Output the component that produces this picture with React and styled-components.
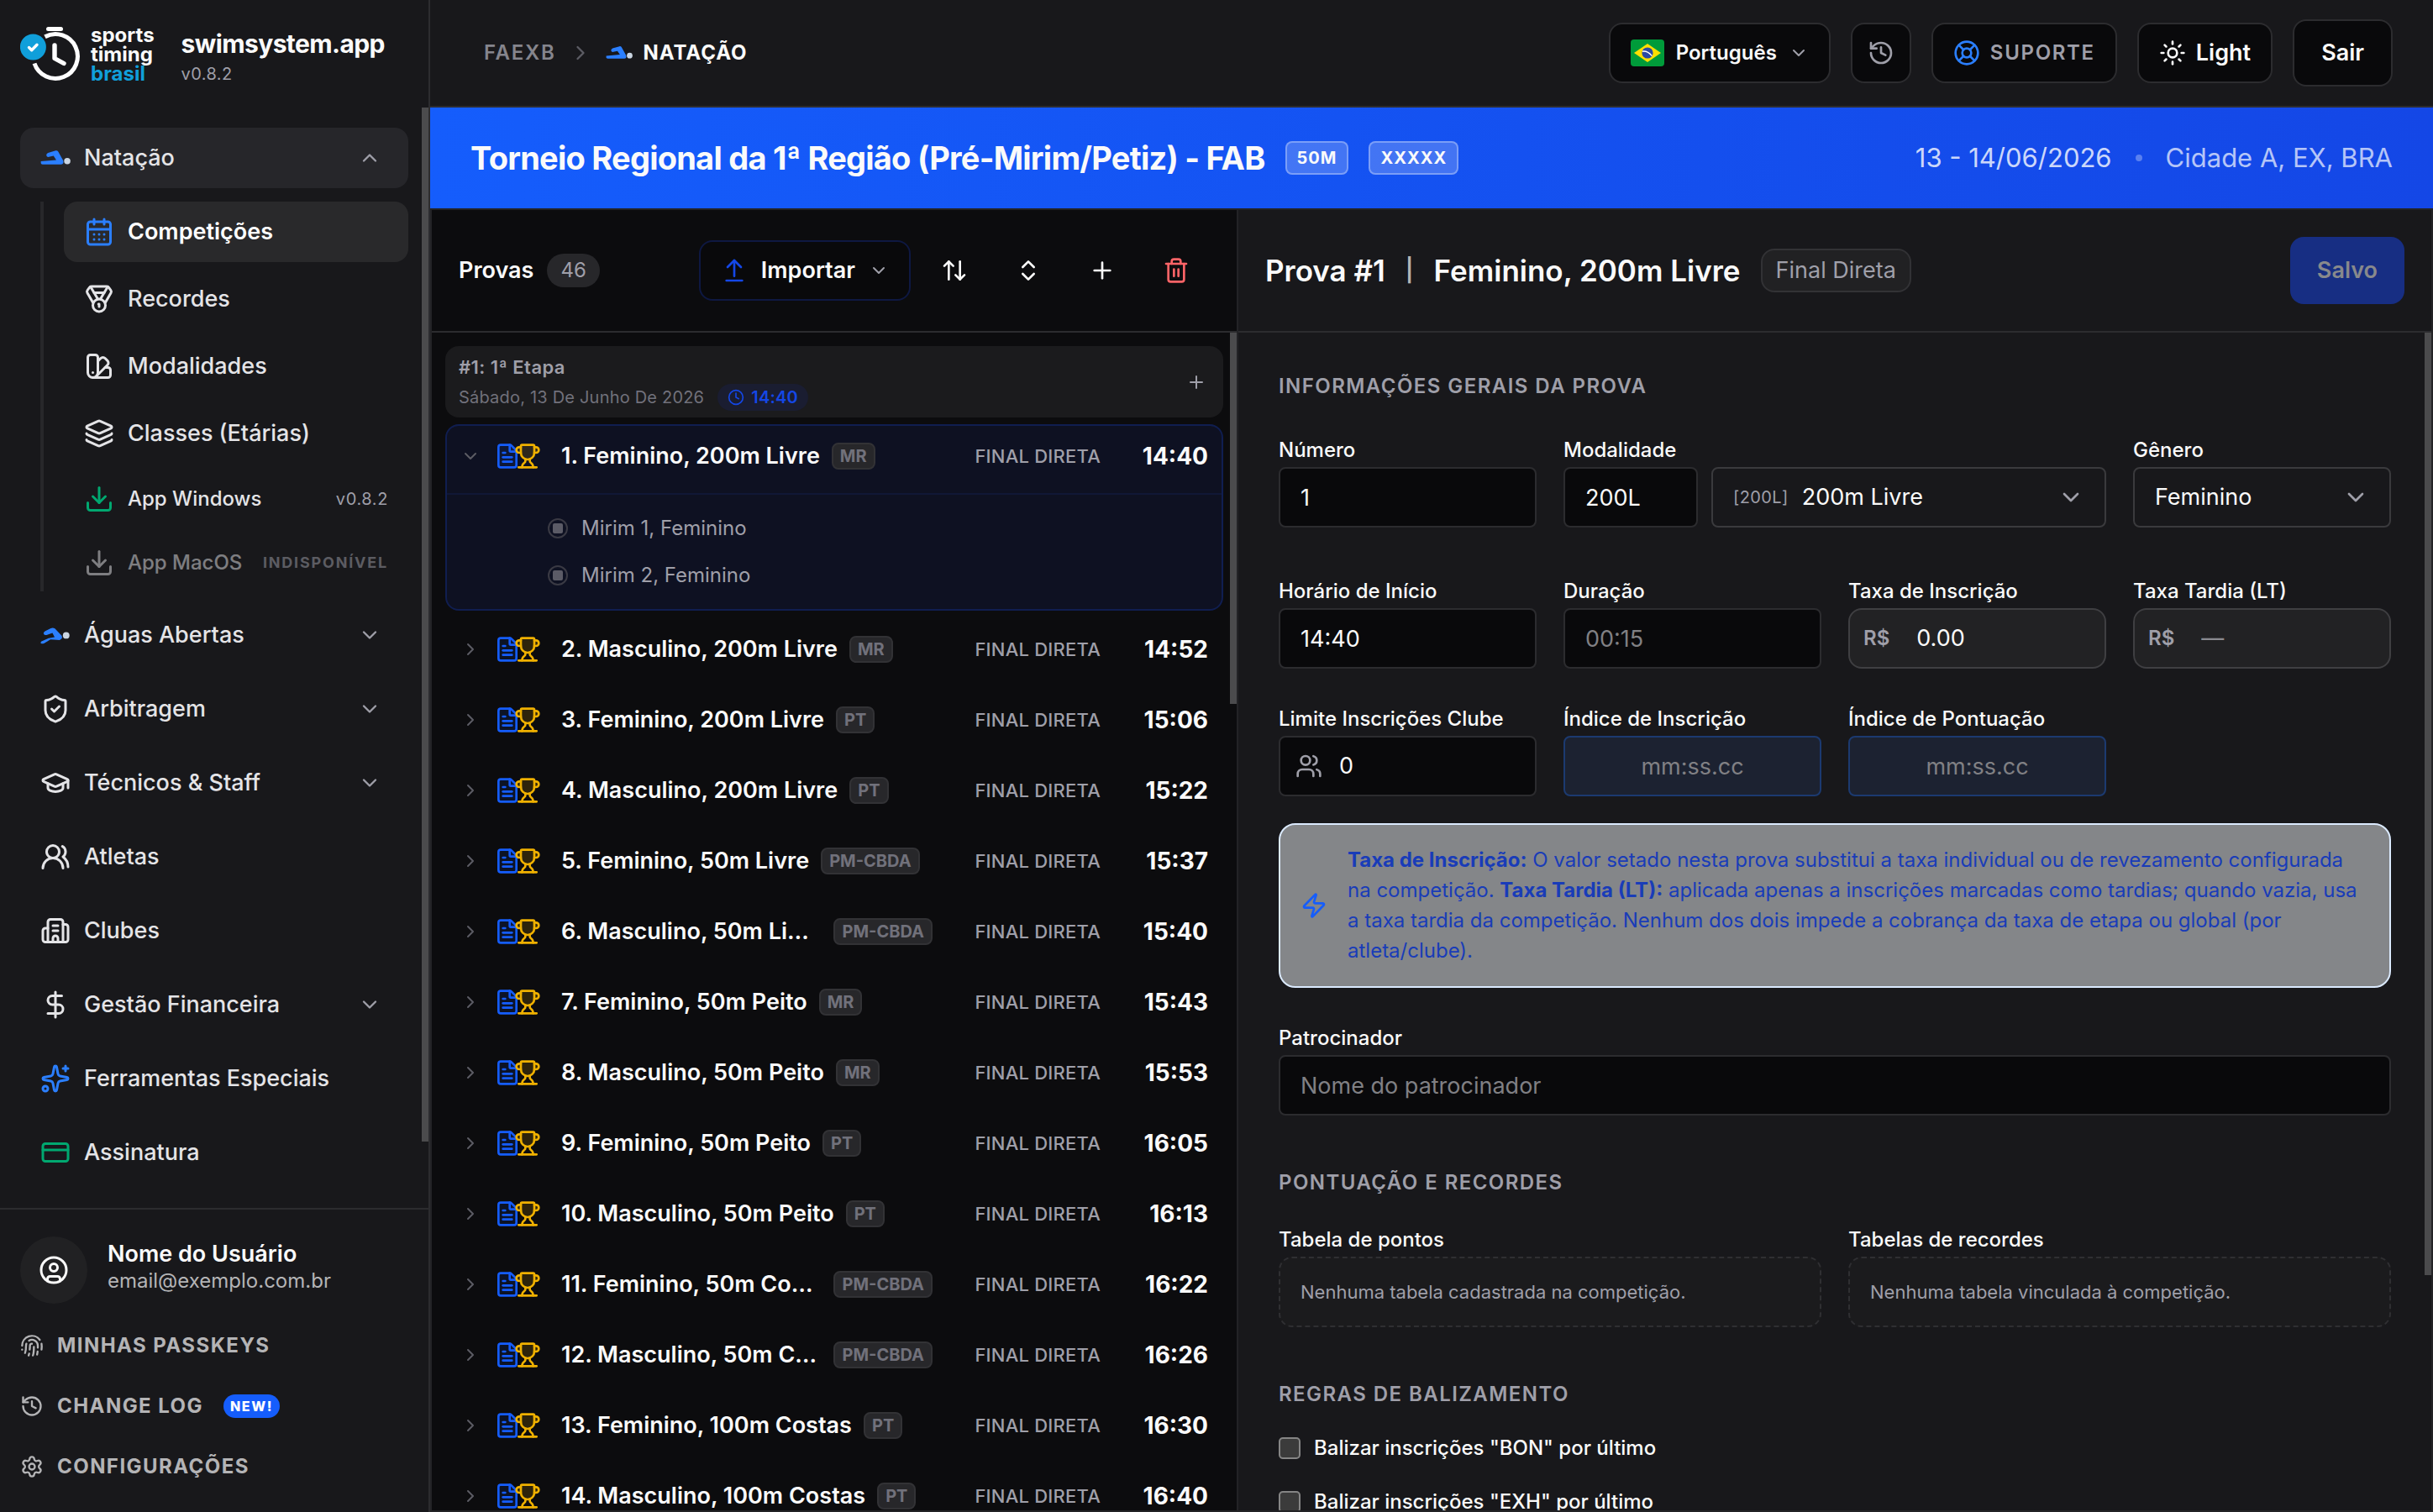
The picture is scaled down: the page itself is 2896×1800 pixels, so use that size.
// src/App.jsx
import React, { useState } from 'react';
import styled, { createGlobalStyle, css } from 'styled-components';
import {
  ArrowUpDown,
  ArrowUpFromLine,
  Building2,
  CalendarDays,
  ChevronDown,
  ChevronRight,
  ChevronsUpDown,
  ChevronUp,
  CircleUser,
  Clock,
  CreditCard,
  DollarSign,
  Download,
  FileText,
  Fingerprint,
  GraduationCap,
  History,
  Layers,
  LifeBuoy,
  Medal,
  Plus,
  Settings,
  ShieldCheck,
  Sparkles,
  Sun,
  SwatchBook,
  Trash2,
  Trophy,
  Users,
  UsersRound,
  Zap,
} from 'lucide-react';

const GlobalStyle = createGlobalStyle`
  * {
    box-sizing: border-box;
  }
  body {
    margin: 0;
    background: #09090b;
    color: #fafafa;
    font-family: 'Inter', 'Liberation Sans', sans-serif;
    font-size: 27px;
    line-height: 32px;
  }
  button, input, select {
    font: inherit;
    color: inherit;
    margin: 0;
  }
  button {
    cursor: pointer;
  }
  a {
    color: inherit;
    text-decoration: none;
  }
  h1, h2, h3, p, ul {
    margin: 0;
    padding: 0;
  }
  ul {
    list-style: none;
  }
  svg {
    flex-shrink: 0;
  }
`;

const Page = styled.div`
  display: flex;
  height: 100vh;
  overflow: hidden;
`;

// Polegar da barra de rolagem, sobreposto à borda da área rolável
const ScrollThumb = styled.div`
  position: absolute;
  top: 0;
  right: 0;
  width: 8px;
  height: ${({ $size }) => $size};
  background: #4b4b4d;
`;

/* ---------- Barra lateral ---------- */

const Sidebar = styled.aside`
  display: flex;
  flex-direction: column;
  flex: 0 0 512px;
  min-width: 0;
  background: #18181b;
  border-right: 2px solid #2c2c2f;
`;

const Brand = styled.div`
  display: flex;
  align-items: center;
  height: 128px;
  padding: 0 24px;
  flex-shrink: 0;
`;

const BrandWords = styled.div`
  display: flex;
  flex-direction: column;
  margin: 0 32px 0 12px;
  font-size: 24px;
  font-weight: 700;
  line-height: 23px;

  span {
    color: #109fda;
  }
`;

const BrandName = styled.div`
  display: flex;
  flex-direction: column;
  padding-top: 12px;
  font-size: 30px;
  font-weight: 700;
  line-height: 36px;
  letter-spacing: -0.02em;

  small {
    font-size: 20px;
    font-weight: 400;
    letter-spacing: 0.02em;
    color: #9f9fa9;
  }
`;

const NavArea = styled.nav`
  position: relative;
  flex: 1;
  min-height: 0;
  padding: 24px 24px 0;
  overflow: hidden;
`;

const NavList = styled.ul`
  display: flex;
  flex-direction: column;
  gap: 16px;
`;

const NavItem = styled.a`
  display: flex;
  align-items: center;
  gap: 16px;
  height: 72px;
  padding: 0 32px 0 24px;
  border-radius: 16px;
  font-weight: 500;
  color: #e4e4e7;
  background: ${({ $open }) => ($open ? '#26262a' : 'transparent')};

  > span {
    flex: 1;
  }
`;

const NavIcon = styled.i`
  display: flex;
  align-items: center;
  justify-content: center;
  width: 36px;
  flex-shrink: 0;
  color: ${({ $color }) => $color || 'inherit'};
`;

const SubList = styled.ul`
  display: flex;
  flex-direction: column;
  gap: 8px;
  margin: 16px 0 0 24px;
  padding-left: 24px;
  border-left: 4px solid #27272a;
`;

const SubItem = styled.a`
  display: flex;
  align-items: center;
  gap: 16px;
  height: ${({ $small }) => ($small ? 68 : 72)}px;
  padding: 0 24px;
  border-radius: 16px;
  font-size: ${({ $small }) => ($small ? 24 : 27)}px;
  font-weight: ${({ $active }) => ($active ? 600 : 500)};
  color: ${({ $active }) => ($active ? '#ffffff' : '#e4e4e7')};
  background: ${({ $active }) => ($active ? '#29292b' : 'transparent')};
  opacity: ${({ $disabled }) => ($disabled ? 0.5 : 1)};

  > span {
    flex: 1;
    white-space: nowrap;
  }
`;

const SubNote = styled.small`
  font-size: ${({ $caps }) => ($caps ? 18 : 20)}px;
  font-weight: ${({ $caps }) => ($caps ? 700 : 400)};
  letter-spacing: ${({ $caps }) => ($caps ? '0.1em' : '0.03em')};
  color: #9f9fa9;
`;

const SidebarFooter = styled.div`
  padding: 32px 24px 18px;
  border-top: 2px solid #2c2c2f;
`;

const User = styled.div`
  display: flex;
  align-items: center;
  gap: 24px;
  margin-bottom: 14px;
`;

const Avatar = styled.div`
  display: flex;
  align-items: center;
  justify-content: center;
  width: 80px;
  height: 80px;
  border-radius: 50%;
  background: #212123;
`;

const UserText = styled.div`
  display: flex;
  flex-direction: column;
  padding-bottom: 6px;
  font-weight: 600;
  line-height: 32px;

  small {
    font-size: 24px;
    font-weight: 400;
    color: #b4b4b6;
  }
`;

const FooterLink = styled.a`
  display: flex;
  align-items: center;
  gap: 16px;
  height: 72px;
  font-size: 24px;
  font-weight: 700;
  letter-spacing: 0.06em;
  color: #b4b4b6;
`;

const NewBadge = styled.span`
  margin-left: 8px;
  padding: 0 8px;
  border-radius: 14px;
  background: #155dfc;
  color: #ffffff;
  font-size: 16px;
  font-weight: 800;
  line-height: 28px;
  letter-spacing: 0.1em;
`;

/* ---------- Topo ---------- */

const Main = styled.main`
  display: flex;
  flex-direction: column;
  flex: 1;
  min-width: 0;
`;

const TopBar = styled.header`
  display: flex;
  align-items: center;
  justify-content: space-between;
  height: 128px;
  flex-shrink: 0;
  padding: 0 48px 0 64px;
  background: #18181b;
  border-bottom: 2px solid #2c2c2f;
`;

const Crumbs = styled.div`
  display: flex;
  align-items: center;
  gap: 16px;
  font-size: 24px;
  font-weight: 600;
  letter-spacing: 0.07em;
  color: #85858d;

  strong {
    display: flex;
    align-items: center;
    gap: 12px;
    font-weight: 700;
    letter-spacing: 0.04em;
    color: #fafafa;
  }
`;

const Actions = styled.div`
  display: flex;
  align-items: center;
  gap: 24px;
`;

const TopButton = styled.button`
  display: flex;
  align-items: center;
  justify-content: center;
  gap: 12px;
  height: ${({ $tall }) => ($tall ? 80 : 72)}px;
  min-width: 72px;
  padding: 0 ${({ $pad }) => $pad ?? 24}px;
  border: 2px solid #2c2c2f;
  border-radius: 16px;
  background: #09090b;
  font-size: ${({ $size }) => $size || 27}px;
  font-weight: 600;
  color: ${({ $muted }) => ($muted ? '#9f9fa9' : '#fafafa')};
  letter-spacing: ${({ $spaced }) => ($spaced ? '0.07em' : 'normal')};
`;

const LanguageButton = styled(TopButton)`
  gap: 14px;
`;

const Banner = styled.section`
  display: flex;
  align-items: center;
  gap: 24px;
  height: 120px;
  flex-shrink: 0;
  padding: 0 48px;
  background: linear-gradient(90deg, #155dfc, #1447e6);

  h1 {
    font-size: 38px;
    font-weight: 700;
    line-height: 48px;
    letter-spacing: -0.02em;
  }
`;

const BannerTag = styled.span`
  padding: 0 12px;
  border: 2px solid rgba(255, 255, 255, 0.3);
  border-radius: 8px;
  background: rgba(255, 255, 255, 0.2);
  font-size: 20px;
  font-weight: 700;
  line-height: 36px;
  letter-spacing: 0.05em;
`;

const BannerInfo = styled.div`
  display: flex;
  align-items: center;
  gap: 28px;
  margin-left: auto;
  font-size: 31px;
  line-height: 40px;
  color: rgba(255, 255, 255, 0.7);

  time {
    color: rgba(255, 255, 255, 0.8);
  }
  i {
    width: 8px;
    height: 8px;
    border-radius: 50%;
    background: rgba(255, 255, 255, 0.3);
  }
`;

const Workspace = styled.div`
  display: flex;
  flex: 1;
  min-height: 0;
  border: 2px solid #232326;
`;

/* ---------- Lista de provas ---------- */

const ListPanel = styled.section`
  display: flex;
  flex-direction: column;
  flex: 0 0 960px;
  min-width: 0;
  background: #0c0c0e;
  border-right: 2px solid #232326;
`;

const PanelHeader = styled.div`
  display: flex;
  align-items: center;
  height: 146px;
  flex-shrink: 0;
  padding: 0 32px;
  border-bottom: 2px solid #2c2c2f;

  h2 {
    font-size: 27px;
    font-weight: 600;
  }
`;

const Count = styled.span`
  margin-left: 16px;
  padding: 0 16px;
  border-radius: 20px;
  background: #27272a;
  font-size: 24px;
  line-height: 40px;
  color: #9f9fa9;
`;

const Tools = styled.div`
  display: flex;
  align-items: center;
  gap: 16px;
  margin-left: auto;
  padding-right: 4px;
`;

const ImportButton = styled.button`
  display: flex;
  align-items: center;
  gap: 16px;
  height: 72px;
  padding: 0 24px;
  border: 2px solid #0e1842;
  border-radius: 16px;
  background: #09090b;
  font-weight: 600;
`;

const ToolButton = styled.button`
  display: flex;
  align-items: center;
  justify-content: center;
  width: 72px;
  height: 72px;
  padding: 0;
  border: 0;
  background: none;
  color: ${({ $danger }) => ($danger ? '#ff6467' : '#fafafa')};
`;

const ListArea = styled.div`
  position: relative;
  flex: 1;
  min-height: 0;
  padding: 16px;
  overflow: hidden;
`;

const Stage = styled.div`
  display: flex;
  align-items: center;
  justify-content: space-between;
  height: 85px;
  margin-bottom: 8px;
  padding: 0 16px;
  border-radius: 16px;
  background: #1b1b1d;

  h3 {
    font-size: 22px;
    font-weight: 600;
    line-height: 36px;
    letter-spacing: 0.02em;
    color: #9f9fa9;
  }
  p {
    display: flex;
    align-items: center;
    gap: 16px;
    font-size: 20px;
    line-height: 36px;
    letter-spacing: 0.01em;
    color: #71717b;
  }
`;

const StageAdd = styled.button`
  display: flex;
  padding: 4px;
  border: 0;
  background: none;
  color: #9f9fa9;
`;

const StageTime = styled.span`
  display: flex;
  align-items: center;
  gap: 8px;
  height: 32px;
  padding: 0 12px;
  border-radius: 16px;
  background: #1a1d31;
  font-weight: 600;
  color: #1447e6;
`;

const EventList = styled.ul`
  display: flex;
  flex-direction: column;
  gap: 8px;
`;

const EventItem = styled.li`
  border-radius: 16px;
  border: 2px solid ${({ $selected }) => ($selected ? '#101e50' : 'transparent')};
  background: ${({ $selected }) => ($selected ? '#0e1122' : 'transparent')};
`;

const EventRow = styled.div`
  display: flex;
  align-items: center;
  height: 72px;
  padding: 0 16px;
`;

const Toggle = styled.button`
  display: flex;
  width: 24px;
  padding: 0;
  border: 0;
  background: none;
  color: #5c5c64;
`;

const EventIcons = styled.span`
  display: flex;
  margin: 0 24px 0 16px;

  svg + svg {
    margin-left: -8px;
  }
`;

const EventTitle = styled.div`
  display: flex;
  align-items: center;
  gap: 14px;
  flex: 1;
  min-width: 0;
  font-weight: 600;

  > span {
    overflow: hidden;
    white-space: nowrap;
    text-overflow: ellipsis;
  }
`;

const Tag = styled.small`
  flex-shrink: 0;
  padding: 0 8px;
  border: 2px solid #323235;
  border-radius: 8px;
  background: #27272a;
  font-size: 20px;
  font-weight: 700;
  line-height: 28px;
  color: #71717b;
`;

const Phase = styled.span`
  flex-shrink: 0;
  width: 216px;
  padding-right: 16px;
  font-size: 22px;
  font-weight: 500;
  letter-spacing: 0.01em;
  text-align: right;
  color: #9f9fa9;
`;

const StartTime = styled.time`
  flex-shrink: 0;
  width: 112px;
  font-size: 28px;
  font-weight: 700;
  text-align: right;
`;

const Classes = styled.ul`
  margin-top: 8px;
  padding: 12px 0 12px 120px;
  border-top: 2px solid #101736;

  li {
    display: flex;
    align-items: center;
    gap: 16px;
    height: 56px;
    font-size: 24px;
    color: #9f9fa9;
  }
`;

const Dot = styled.i`
  display: flex;
  align-items: center;
  justify-content: center;
  width: 24px;
  height: 24px;
  border: 2px solid #3a3a44;
  border-radius: 50%;

  &::after {
    content: '';
    width: 12px;
    height: 12px;
    border-radius: 2px;
    background: #5b5b66;
  }
`;

/* ---------- Formulário da prova ---------- */

const DetailPanel = styled.section`
  display: flex;
  flex-direction: column;
  flex: 1;
  min-width: 0;
  background: #18181b;
`;

const DetailTitle = styled.div`
  display: flex;
  align-items: center;
  gap: 24px;
  font-size: 35px;
  font-weight: 600;
  line-height: 48px;
  white-space: nowrap;

  h2 {
    font-size: 35px;
    line-height: 48px;
  }
  > i {
    font-size: 27px;
    font-style: normal;
    font-weight: 600;
    color: #b4b4b6;
  }
`;

const PhaseBadge = styled.span`
  padding: 0 16px;
  border: 2px solid #323235;
  border-radius: 16px;
  background: #212123;
  font-size: 27px;
  font-weight: 400;
  color: #9f9fa9;
`;

const SaveButton = styled.button`
  height: 80px;
  margin-left: auto;
  padding: 0 32px;
  border: 0;
  border-radius: 16px;
  background: #172e83;
  font-weight: 600;
  color: #88898c;
`;

const FormArea = styled.form`
  position: relative;
  display: flex;
  flex-direction: column;
  gap: 64px;
  flex: 1;
  min-height: 0;
  padding: 48px 48px 0;
  overflow: hidden;
`;

const Section = styled.section`
  display: flex;
  flex-direction: column;
  flex-shrink: 0;
  gap: ${({ $gap }) => $gap}px;

  h3 {
    font-size: 24px;
    font-weight: 600;
    line-height: 32px;
    letter-spacing: 0.06em;
    color: #9f9fa9;
  }
`;

const Fields = styled.div`
  display: grid;
  grid-template-columns: repeat(${({ $cols }) => $cols || 4}, 1fr);
  gap: 44px 32px;
`;

const Field = styled.div`
  display: flex;
  flex-direction: column;
  gap: 4px;
  min-width: 0;
  grid-column: span ${({ $span }) => $span || 1};
  padding-bottom: ${({ $tall }) => ($tall ? 16 : 0)}px;

  label, h4 {
    margin: 0;
    font-size: 24px;
    font-weight: 500;
    line-height: 32px;
  }
`;

const boxStyle = css`
  width: 100%;
  height: 72px;
  border: 2px solid #2c2c2f;
  border-radius: 8px;
  background: #09090b;
`;

const TextInput = styled.input`
  ${boxStyle}
  padding: 0 24px;
  outline: none;

  &::placeholder {
    color: #808084;
  }
  ${({ $index }) =>
    $index &&
    css`
      border-color: #1c3a70;
      background: #1c2231;
      text-align: center;
    `}
`;

const InputBox = styled.div`
  ${boxStyle}
  display: flex;
  align-items: center;
  gap: ${({ $gap }) => $gap || 16}px;
  padding: 0 ${({ $pad }) => $pad || 24}px;
  ${({ $variant }) =>
    $variant === 'select' &&
    css`
      border-color: #3a3a3d;
      background: #18181b;
    `}
  ${({ $variant }) =>
    $variant === 'money' &&
    css`
      border-color: #3f3f42;
      border-radius: 16px;
      background: #222224;
    `}

  svg {
    color: #9f9fa9;
  }
  small {
    font-size: 20px;
    color: #9f9fa9;
    letter-spacing: 0.02em;
  }
  b {
    font-size: 24px;
    font-weight: 600;
    color: #9f9fa9;
  }
  input, select {
    flex: 1;
    min-width: 0;
    padding: 0;
    border: 0;
    outline: none;
    appearance: none;
    background: none;
  }
  input::placeholder {
    color: #8a8a90;
  }
`;

const FieldPair = styled.div`
  display: grid;
  grid-template-columns: 160px 1fr;
  gap: 16px;
`;

const Notice = styled.div`
  display: flex;
  align-items: center;
  gap: 24px;
  margin-top: -12px;
  padding: 24px;
  border: 2px solid #dbeafe;
  border-radius: 20px;
  background: #848689;
  color: #155dfc;

  p {
    font-size: 24px;
    line-height: 36px;
    color: #193cb8;
  }
`;

const EmptyBox = styled.p`
  padding: 24px;
  border: 2px dashed #2f2f32;
  border-radius: 16px;
  background: #1b1b1d;
  font-size: 22px;
  color: #9f9fa9;
`;

const CheckLabel = styled.label`
  display: flex;
  align-items: center;
  gap: 16px;
  font-size: 24px;
  font-weight: 500;

  input {
    appearance: none;
    width: 26px;
    height: 26px;
    border: 2px solid #858585;
    border-radius: 5px;
    background: #3b3b3b;
  }
`;

/* ---------- Desenhos ---------- */

const Logo = () => (
  <svg width="72" height="66" viewBox="24 31 72 66" fill="none" strokeLinecap="round" strokeLinejoin="round">
    <path d="M53.5 43.8A26.4 26.4 0 1 1 41 75.5" stroke="#fff" strokeWidth="5" strokeLinecap="butt" />
    <path d="M57.5 34.6h15" stroke="#fff" strokeWidth="5" />
    <path d="M65 54v15.5l11 6" stroke="#fff" strokeWidth="5.4" />
    <circle cx="39.4" cy="56" r="15.5" fill="#109fda" />
    <path d="M34.5 56.5l3.2 3.2 6.3-6.4" stroke="#fff" strokeWidth="3.4" />
  </svg>
);

const Swimmer = ({ width = 36 }) => (
  <svg width={width} viewBox="0 0 110 60">
    <path
      d="M2 43L58 38L48 23L31 27Q24 28 22 22Q21 15 28 12L56 4Q62 3 65 8L83 40Q87 53 76 54H8Q2 54 2 50Z"
      fill="#2b7fff"
    />
    <circle cx="98" cy="42" r="11.5" fill="#cad5e2" />
  </svg>
);

const OpenWaterSwimmer = () => (
  <svg width="36" viewBox="0 0 110 72">
    <path
      d="M3 60L30 48L52 44L44 29L23 37Q13 37 12 31Q11 26 18 22L38 12Q46 9 53 13L77 38Q84 50 70 55L37 53L13 67Q2 70 1 65Z"
      fill="#2b7fff"
    />
    <circle cx="94" cy="38" r="12" fill="#cad5e2" />
  </svg>
);

const BrazilFlag = () => (
  <svg width="40" height="32" viewBox="0 0 40 32">
    <rect width="40" height="32" rx="4" fill="#009b3a" />
    <path d="M20 5L36 16L20 27L4 16Z" fill="#fedf00" />
    <circle cx="20" cy="16" r="6.6" fill="#2b49a3" />
    <path d="M14 14.2Q20 13.2 25.4 19.6" stroke="#fff" strokeWidth="1.4" fill="none" />
  </svg>
);

/* ---------- Dados ---------- */

const subItems = [
  { label: 'Competições', icon: CalendarDays, color: '#2b7fff', active: true },
  { label: 'Recordes', icon: Medal },
  { label: 'Modalidades', icon: SwatchBook },
  { label: 'Classes (Etárias)', icon: Layers },
  { label: 'App Windows', icon: Download, color: '#00a870', note: 'v0.8.2', small: true },
  { label: 'App MacOS', icon: Download, note: 'INDISPONÍVEL', small: true, disabled: true },
];

const navItems = [
  { label: 'Águas Abertas', icon: OpenWaterSwimmer, expandable: true },
  { label: 'Arbitragem', icon: ShieldCheck, expandable: true },
  { label: 'Técnicos & Staff', icon: GraduationCap, expandable: true },
  { label: 'Atletas', icon: UsersRound },
  { label: 'Clubes', icon: Building2 },
  { label: 'Gestão Financeira', icon: DollarSign, expandable: true },
  { label: 'Ferramentas Especiais', icon: Sparkles, color: '#2b7fff' },
  { label: 'Assinatura', icon: CreditCard, color: '#00a870' },
];

const events = [
  { id: 1, name: 'Feminino, 200m Livre', tag: 'MR', time: '14:40', classes: ['Mirim 1, Feminino', 'Mirim 2, Feminino'] },
  { id: 2, name: 'Masculino, 200m Livre', tag: 'MR', time: '14:52' },
  { id: 3, name: 'Feminino, 200m Livre', tag: 'PT', time: '15:06' },
  { id: 4, name: 'Masculino, 200m Livre', tag: 'PT', time: '15:22' },
  { id: 5, name: 'Feminino, 50m Livre', tag: 'PM-CBDA', time: '15:37' },
  { id: 6, name: 'Masculino, 50m Livre', tag: 'PM-CBDA', time: '15:40' },
  { id: 7, name: 'Feminino, 50m Peito', tag: 'MR', time: '15:43' },
  { id: 8, name: 'Masculino, 50m Peito', tag: 'MR', time: '15:53' },
  { id: 9, name: 'Feminino, 50m Peito', tag: 'PT', time: '16:05' },
  { id: 10, name: 'Masculino, 50m Peito', tag: 'PT', time: '16:13' },
  { id: 11, name: 'Feminino, 50m Costas', tag: 'PM-CBDA', time: '16:22' },
  { id: 12, name: 'Masculino, 50m Costas', tag: 'PM-CBDA', time: '16:26' },
  { id: 13, name: 'Feminino, 100m Costas', tag: 'PT', time: '16:30' },
  { id: 14, name: 'Masculino, 100m Costas', tag: 'PT', time: '16:40' },
];

function SidebarMenu() {
  return (
    <Sidebar>
      <Brand>
        <Logo />
        <BrandWords>
          sports
          <br />
          timing
          <span>brasil</span>
        </BrandWords>
        <BrandName>
          swimsystem.app
          <small>v0.8.2</small>
        </BrandName>
      </Brand>

      <NavArea>
        <NavList>
          <li>
            <NavItem href="#natacao" $open>
              <NavIcon><Swimmer /></NavIcon>
              <span>Natação</span>
              <ChevronUp size={28} color="#9f9fa9" />
            </NavItem>
            <SubList>
              {subItems.map(({ label, icon: Icon, color, active, note, small, disabled }) => (
                <li key={label}>
                  <SubItem href="#" $active={active} $small={small} $disabled={disabled}>
                    <NavIcon $color={color}><Icon size={36} /></NavIcon>
                    <span>{label}</span>
                    {note && <SubNote $caps={disabled}>{note}</SubNote>}
                  </SubItem>
                </li>
              ))}
            </SubList>
          </li>
          {navItems.map(({ label, icon: Icon, color, expandable }) => (
            <li key={label}>
              <NavItem href="#">
                <NavIcon $color={color}><Icon size={36} /></NavIcon>
                <span>{label}</span>
                {expandable && <ChevronDown size={28} color="#9f9fa9" />}
              </NavItem>
            </li>
          ))}
        </NavList>
        <ScrollThumb $size="94%" />
      </NavArea>

      <SidebarFooter>
        <User>
          <Avatar><CircleUser size={36} /></Avatar>
          <UserText>
            Nome do Usuário
            <small>email@exemplo.com.br</small>
          </UserText>
        </User>
        <FooterLink href="#"><Fingerprint size={28} />MINHAS PASSKEYS</FooterLink>
        <FooterLink href="#"><History size={28} />CHANGE LOG<NewBadge>NEW!</NewBadge></FooterLink>
        <FooterLink href="#"><Settings size={28} />CONFIGURAÇÕES</FooterLink>
      </SidebarFooter>
    </Sidebar>
  );
}

function EventsPanel() {
  const [openId, setOpenId] = useState(1);

  return (
    <ListPanel>
      <PanelHeader>
        <h2>Provas</h2>
        <Count>46</Count>
        <Tools>
          <ImportButton type="button">
            <ArrowUpFromLine size={32} color="#1447e6" />
            Importar
            <ChevronDown size={24} color="#9f9fa9" />
          </ImportButton>
          <ToolButton type="button" aria-label="Ordenar"><ArrowUpDown size={32} /></ToolButton>
          <ToolButton type="button" aria-label="Expandir"><ChevronsUpDown size={32} /></ToolButton>
          <ToolButton type="button" aria-label="Adicionar"><Plus size={32} /></ToolButton>
          <ToolButton type="button" aria-label="Excluir" $danger><Trash2 size={32} /></ToolButton>
        </Tools>
      </PanelHeader>

      <ListArea>
        <Stage>
          <div>
            <h3>#1: 1ª Etapa</h3>
            <p>
              Sábado, 13 De Junho De 2026
              <StageTime><Clock size={20} />14:40</StageTime>
            </p>
          </div>
          <StageAdd type="button" aria-label="Adicionar prova"><Plus size={24} /></StageAdd>
        </Stage>
        <EventList>
          {events.map(({ id, name, tag, time, classes }) => {
            const open = id === openId;
            return (
              <EventItem key={id} $selected={open}>
                <EventRow>
                  <Toggle type="button" aria-label={`Abrir prova ${id}`} onClick={() => setOpenId(open ? null : id)}>
                    {open ? <ChevronDown size={24} /> : <ChevronRight size={24} />}
                  </Toggle>
                  <EventIcons>
                    <FileText size={32} color="#155dfc" fill="rgba(21, 93, 252, 0.1)" />
                    <Trophy size={32} color="#f0b100" fill="rgba(240, 177, 0, 0.15)" />
                  </EventIcons>
                  <EventTitle>
                    <span>{id}. {name}</span>
                    <Tag>{tag}</Tag>
                  </EventTitle>
                  <Phase>FINAL DIRETA</Phase>
                  <StartTime>{time}</StartTime>
                </EventRow>
                {open && classes && (
                  <Classes>
                    {classes.map(item => (
                      <li key={item}><Dot />{item}</li>
                    ))}
                  </Classes>
                )}
              </EventItem>
            );
          })}
        </EventList>
        <ScrollThumb $size="31.5%" />
      </ListArea>
    </ListPanel>
  );
}

function EventForm() {
  return (
    <DetailPanel>
      <PanelHeader>
        <DetailTitle>
          <h2>Prova #1</h2>
          <i>|</i>
          <span>Feminino, 200m Livre</span>
          <PhaseBadge>Final Direta</PhaseBadge>
        </DetailTitle>
        <SaveButton type="button" disabled>Salvo</SaveButton>
      </PanelHeader>

      <FormArea>
        <Section $gap={44}>
          <h3>INFORMAÇÕES GERAIS DA PROVA</h3>
          <Fields>
            <Field $tall>
              <label htmlFor="numero">Número</label>
              <TextInput id="numero" defaultValue="1" />
            </Field>
            <Field $span={2} $tall>
              <label htmlFor="modalidade">Modalidade</label>
              <FieldPair>
                <TextInput id="modalidade" defaultValue="200L" />
                <InputBox $variant="select">
                  <small>[200L]</small>
                  <select aria-label="Modalidade">
                    <option>200m Livre</option>
                  </select>
                  <ChevronDown size={32} />
                </InputBox>
              </FieldPair>
            </Field>
            <Field $tall>
              <label htmlFor="genero">Gênero</label>
              <InputBox $variant="select">
                <select id="genero">
                  <option>Feminino</option>
                </select>
                <ChevronDown size={32} />
              </InputBox>
            </Field>

            <Field>
              <label htmlFor="horario">Horário de Início</label>
              <TextInput id="horario" defaultValue="14:40" />
            </Field>
            <Field>
              <label htmlFor="duracao">Duração</label>
              <TextInput id="duracao" placeholder="00:15" />
            </Field>
            <Field>
              <label htmlFor="taxa">Taxa de Inscrição</label>
              <InputBox $variant="money" $pad={16} $gap={32}>
                <b>R$</b>
                <input id="taxa" defaultValue="0.00" />
              </InputBox>
            </Field>
            <Field>
              <label htmlFor="taxa-tardia">Taxa Tardia (LT)</label>
              <InputBox $variant="money" $pad={16} $gap={32}>
                <b>R$</b>
                <input id="taxa-tardia" placeholder="—" />
              </InputBox>
            </Field>

            <Field>
              <label htmlFor="limite">Limite Inscrições Clube</label>
              <InputBox $pad={18} $gap={20}>
                <Users size={32} />
                <input id="limite" defaultValue="0" />
              </InputBox>
            </Field>
            <Field>
              <label htmlFor="indice-inscricao">Índice de Inscrição</label>
              <TextInput id="indice-inscricao" placeholder="mm:ss.cc" $index />
            </Field>
            <Field>
              <label htmlFor="indice-pontuacao">Índice de Pontuação</label>
              <TextInput id="indice-pontuacao" placeholder="mm:ss.cc" $index />
            </Field>
          </Fields>

          <Notice>
            <Zap size={32} />
            <p>
              <strong>Taxa de Inscrição:</strong> O valor setado nesta prova substitui a taxa individual ou de
              revezamento configurada na competição. <strong>Taxa Tardia (LT):</strong> aplicada apenas a inscrições
              marcadas como tardias; quando vazia, usa a taxa tardia da competição. Nenhum dos dois impede a cobrança
              da taxa de etapa ou global (por atleta/clube).
            </p>
          </Notice>

          <Field>
            <label htmlFor="patrocinador">Patrocinador</label>
            <TextInput id="patrocinador" placeholder="Nome do patrocinador" />
          </Field>
        </Section>

        <Section $gap={36}>
          <h3>PONTUAÇÃO E RECORDES</h3>
          <Fields $cols={2}>
            <Field>
              <h4>Tabela de pontos</h4>
              <EmptyBox>Nenhuma tabela cadastrada na competição.</EmptyBox>
            </Field>
            <Field>
              <h4>Tabelas de recordes</h4>
              <EmptyBox>Nenhuma tabela vinculada à competição.</EmptyBox>
            </Field>
          </Fields>
        </Section>

        <Section $gap={32}>
          <h3>REGRAS DE BALIZAMENTO</h3>
          <CheckLabel><input type="checkbox" />Balizar inscrições "BON" por último</CheckLabel>
          <CheckLabel><input type="checkbox" />Balizar inscrições "EXH" por último</CheckLabel>
        </Section>
        <ScrollThumb $size="80%" />
      </FormArea>
    </DetailPanel>
  );
}

function App() {
  return (
    <>
      <GlobalStyle />
      <Page>
        <SidebarMenu />
        <Main>
          <TopBar>
            <Crumbs>
              FAEXB
              <ChevronRight size={28} color="#5c5c64" />
              <strong><Swimmer width={32} />NATAÇÃO</strong>
            </Crumbs>
            <Actions>
              <LanguageButton type="button" $size={24}>
                <BrazilFlag />
                Português
                <ChevronDown size={24} color="#9f9fa9" />
              </LanguageButton>
              <TopButton type="button" aria-label="Histórico" $pad={0} $muted><History size={32} /></TopButton>
              <TopButton type="button" $size={24} $muted $spaced>
                <LifeBuoy size={32} color="#2b7fff" />
                SUPORTE
              </TopButton>
              <TopButton type="button"><Sun size={32} />Light</TopButton>
              <TopButton type="button" $tall $pad={32}>Sair</TopButton>
            </Actions>
          </TopBar>

          <Banner>
            <h1>Torneio Regional da 1ª Região (Pré-Mirim/Petiz) - FAB</h1>
            <BannerTag>50M</BannerTag>
            <BannerTag>XXXXX</BannerTag>
            <BannerInfo>
              <time>13 - 14/06/2026</time>
              <i />
              <span>Cidade A, EX, BRA</span>
            </BannerInfo>
          </Banner>

          <Workspace>
            <EventsPanel />
            <EventForm />
          </Workspace>
        </Main>
      </Page>
    </>
  );
}

export default App;
